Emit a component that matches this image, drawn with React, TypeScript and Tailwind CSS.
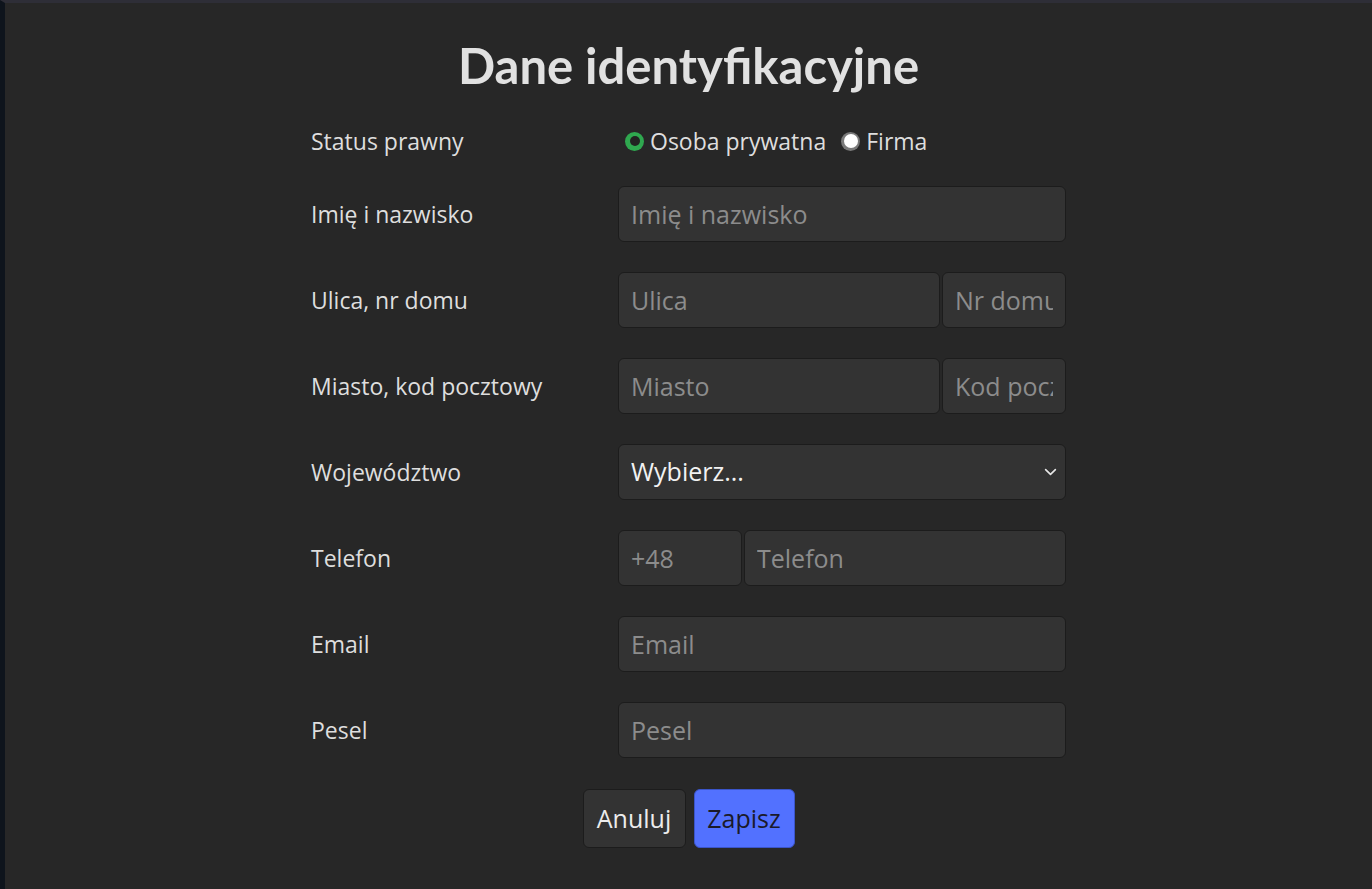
import React, { useState } from "react";

const inputCls =
  "h-[56px] min-w-0 rounded-[6px] border border-[#1c1c1c] bg-[#333333] px-3 text-[25px] text-[#e6e6e6] placeholder:text-[#8c8c8c] outline-none";

function Row({ label, children }: { label: string; children: React.ReactNode }) {
  return (
    <div className="flex items-center">
      <label className="w-[307px] shrink-0 text-[23px] text-[#dedede]">{label}</label>
      <div className="flex min-w-0 flex-1 gap-[2px]">{children}</div>
    </div>
  );
}

function Radio({ checked, label, onClick }: { checked: boolean; label: string; onClick: () => void }) {
  return (
    <label className="flex cursor-pointer items-center gap-[6px]" onClick={onClick}>
      <span
        className={
          checked
            ? "flex h-[19px] w-[19px] items-center justify-center rounded-full bg-[#2fa84f]"
            : "flex h-[19px] w-[19px] items-center justify-center rounded-full bg-[#7a7a7a]"
        }
      >
        <span
          className={
            checked ? "h-[10px] w-[10px] rounded-full bg-[#222]" : "h-[14px] w-[14px] rounded-full bg-white"
          }
        />
      </span>
      {label}
    </label>
  );
}

export default function App() {
  const [status, setStatus] = useState("osoba");

  return (
    <div
      className="min-h-screen border-l-[5px] border-t-[3px] border-l-[#0e141c] border-t-[#2e2e37] bg-[#272727]"
      style={{ fontFamily: '"Open Sans", "Noto Sans", sans-serif' }}
    >
      <div className="mx-auto w-[755px] pt-[32px]">
        <h1
          className="text-center text-[49px] font-bold leading-[60px] text-[#e1e1e1]"
          style={{ fontFamily: 'Lato, "Open Sans", sans-serif' }}
        >
          Dane identyfikacyjne
        </h1>

        <div className="mt-[28px] flex h-[36px] items-center">
          <span className="w-[314px] shrink-0 text-[23px] text-[#dedede]">Status prawny</span>
          <div className="flex items-center gap-[15px] text-[23px] text-[#dedede]">
            <Radio checked={status === "osoba"} label="Osoba prywatna" onClick={() => setStatus("osoba")} />
            <Radio checked={status === "firma"} label="Firma" onClick={() => setStatus("firma")} />
          </div>
        </div>

        <div className="mt-[27px] flex flex-col gap-[30px]">
          <Row label="Imię i nazwisko">
            <input className={inputCls + " w-0 flex-1"} placeholder="Imię i nazwisko" />
          </Row>
          <Row label="Ulica, nr domu">
            <input className={inputCls + " w-0 flex-1"} placeholder="Ulica" />
            <input className={inputCls + " w-[124px] shrink-0"} placeholder="Nr domu" />
          </Row>
          <Row label="Miasto, kod pocztowy">
            <input className={inputCls + " w-0 flex-1"} placeholder="Miasto" />
            <input className={inputCls + " w-[124px] shrink-0"} placeholder="Kod pocztowy" />
          </Row>
          <Row label="Województwo">
            <div className="relative flex flex-1">
              <select className={inputCls + " w-full appearance-none text-[#f2f2f2]"} defaultValue="">
                <option value="">Wybierz...</option>
                <option>mazowieckie</option>
                <option>małopolskie</option>
              </select>
              <svg
                className="pointer-events-none absolute right-[9px] top-1/2 -translate-y-1/2"
                width="13"
                height="13"
                viewBox="0 0 16 16"
                fill="none"
                stroke="#e6e6e6"
                strokeWidth="2"
                strokeLinecap="round"
                strokeLinejoin="round"
              >
                <path d="M2 5l6 6 6-6" />
              </svg>
            </div>
          </Row>
          <Row label="Telefon">
            <input className={inputCls + " w-[124px] shrink-0"} placeholder="+48" />
            <input className={inputCls + " w-0 flex-1"} placeholder="Telefon" />
          </Row>
          <Row label="Email">
            <input className={inputCls + " w-0 flex-1"} placeholder="Email" />
          </Row>
          <Row label="Pesel">
            <input className={inputCls + " w-0 flex-1"} placeholder="Pesel" />
          </Row>
        </div>

        <div className="mt-[31px] flex justify-center gap-[8px]">
          <button className="h-[59px] w-[103px] rounded-[6px] border border-[#1c1c1c] bg-[#333333] text-[25px] text-[#ececec]">
            Anuluj
          </button>
          <button className="h-[59px] w-[101px] rounded-[6px] border border-[#3b55c9] bg-[#5271ff] text-[25px] text-[#1a1a2a]">
            Zapisz
          </button>
        </div>
      </div>
    </div>
  );
}
